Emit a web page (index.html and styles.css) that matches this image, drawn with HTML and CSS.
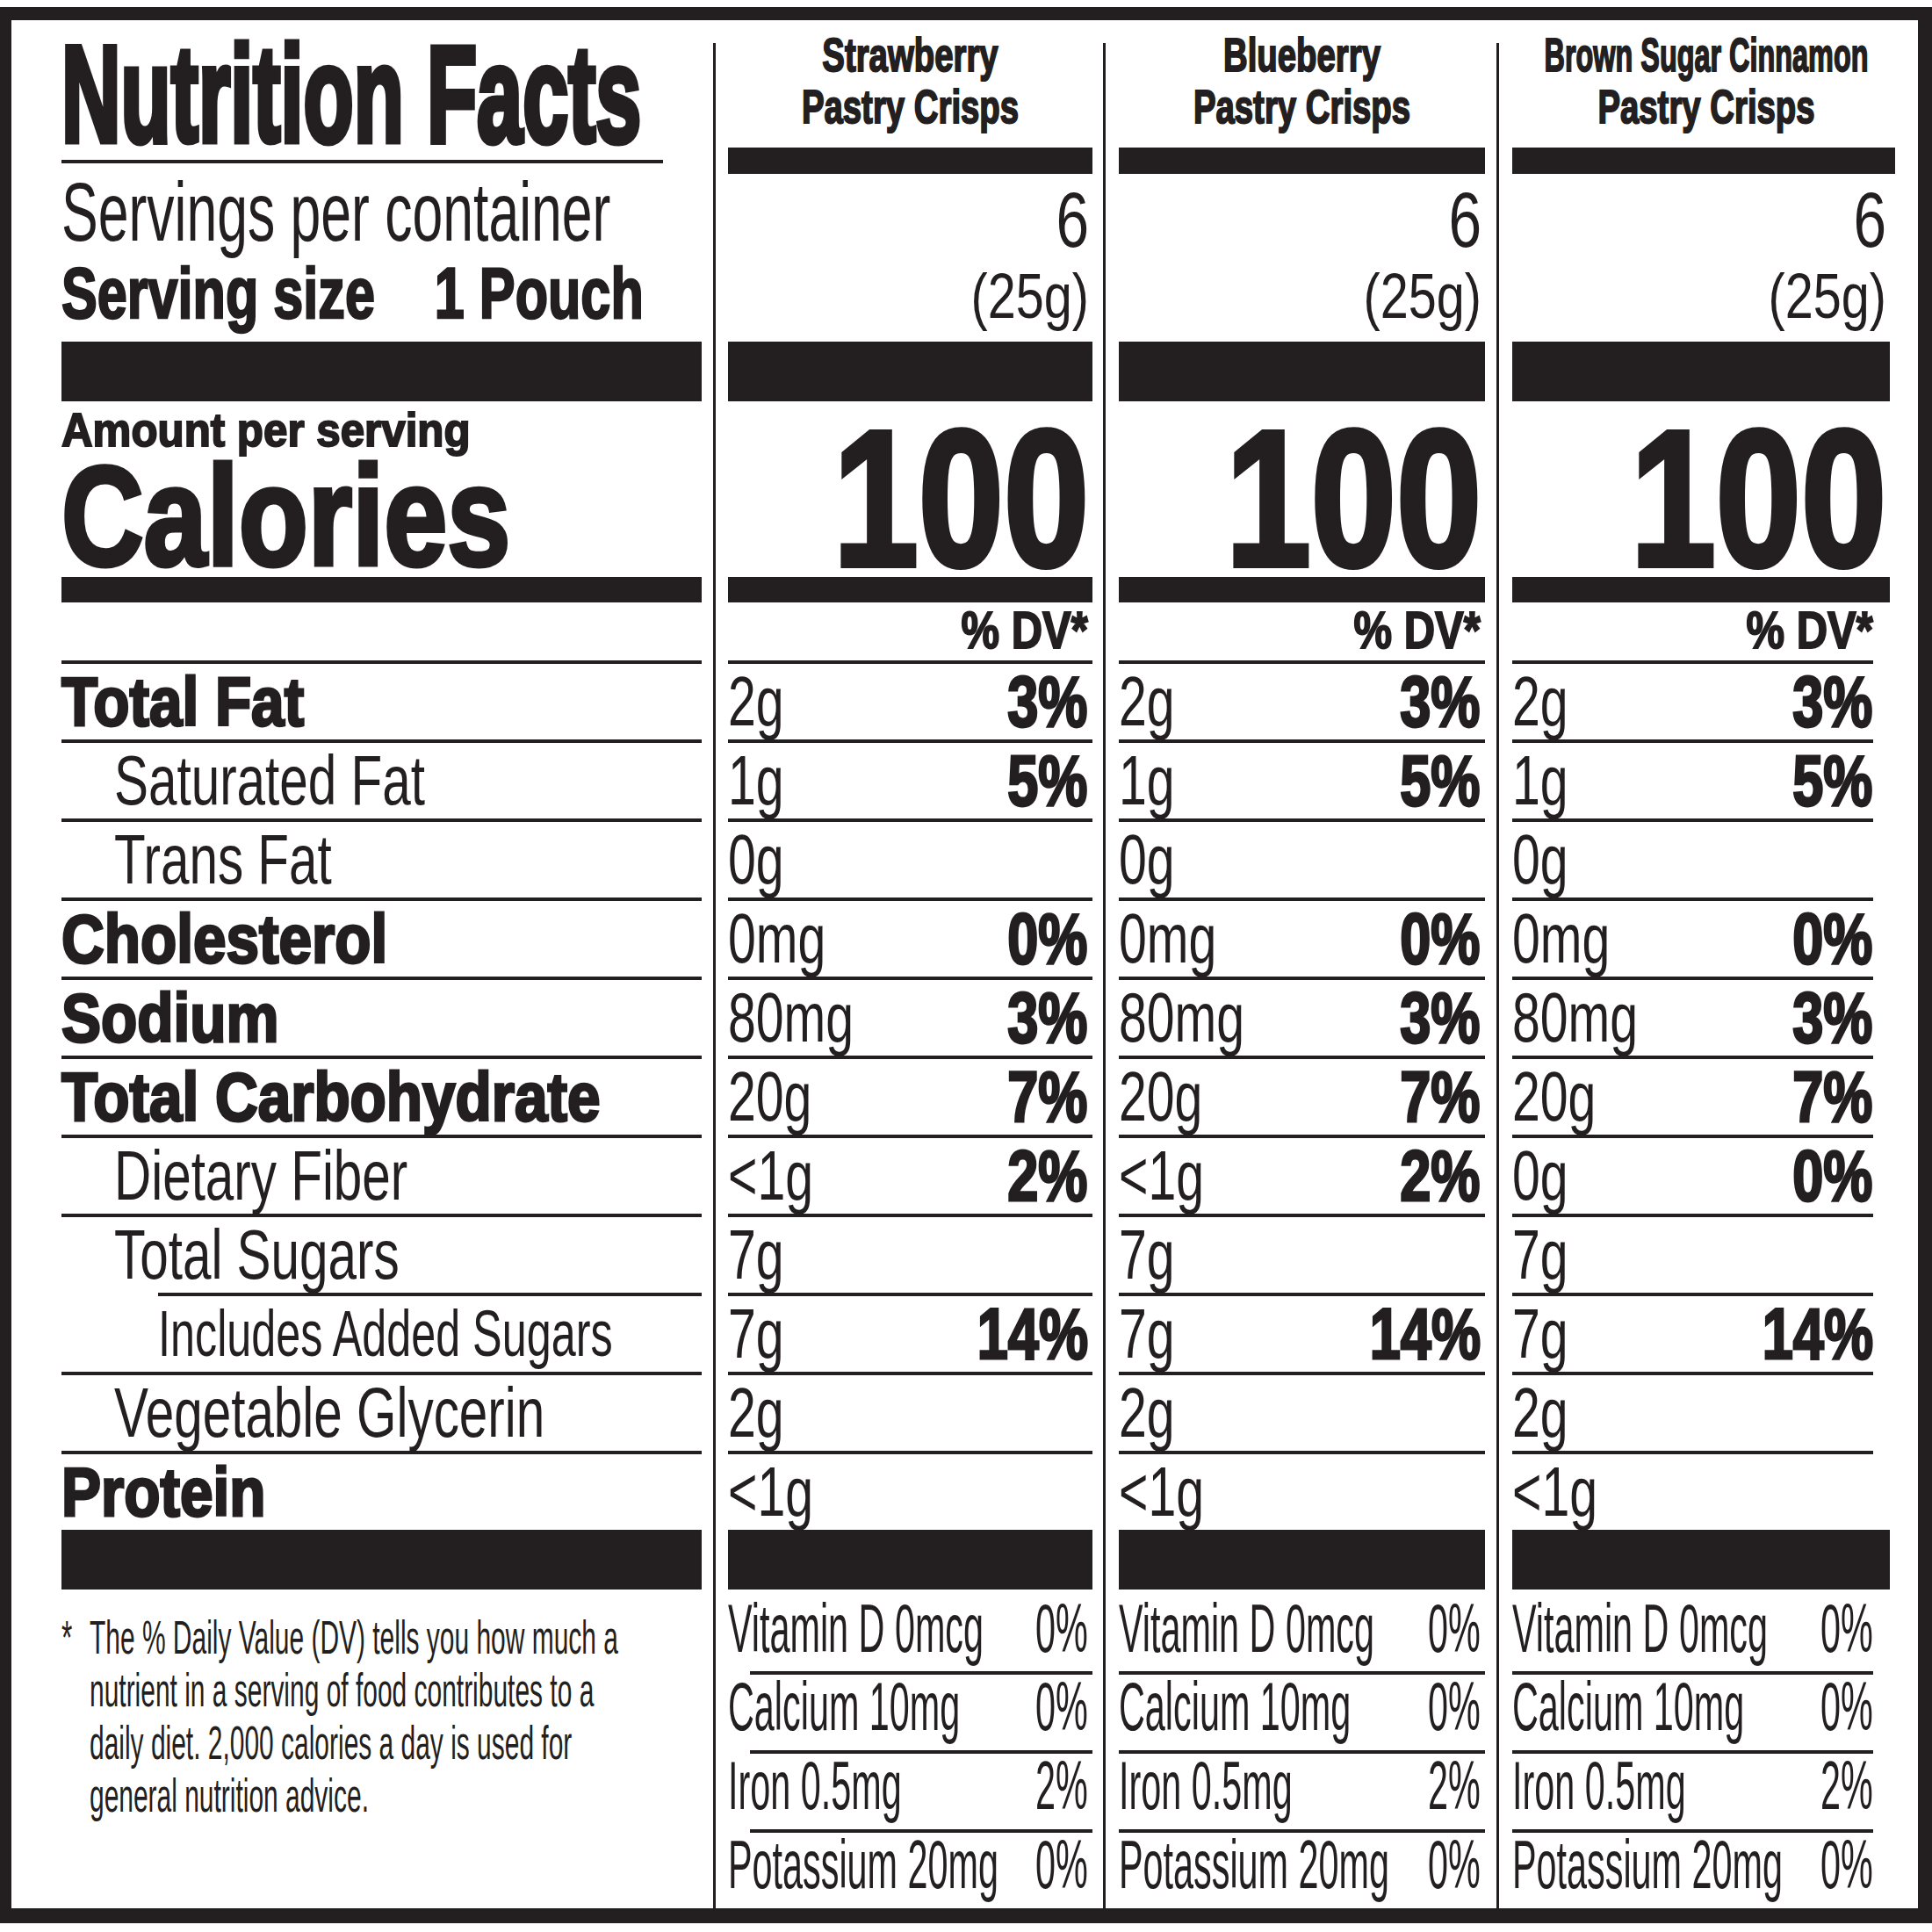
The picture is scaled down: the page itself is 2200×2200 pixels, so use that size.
FILE: index.html
```html
<!DOCTYPE html>
<html>
<head>
<meta charset="utf-8">
<link rel="stylesheet" href="styles.css">
</head>
<body>
<div class="label">
  <div class="main">
    <div class="top">
      <div class="title">Nutrition Facts</div>
      <div class="title-rule"></div>
      <div class="servings">Servings per container</div>
      <div class="ssize">Serving size    1 Pouch</div>
    </div>
    <div class="bar-thick"></div>
    <div class="cal">
      <div class="amount">Amount per serving</div>
      <div class="calories">Calories</div>
    </div>
    <div class="bar-mid"></div>
    <div class="dv"></div>
    <div class="row"><span class="lbl b">Total Fat</span></div>
    <div class="row"><span class="lbl ind">Saturated Fat</span></div>
    <div class="row"><span class="lbl ind">Trans Fat</span></div>
    <div class="row"><span class="lbl b">Cholesterol</span></div>
    <div class="row"><span class="lbl b">Sodium</span></div>
    <div class="row"><span class="lbl b">Total Carbohydrate</span></div>
    <div class="row"><span class="lbl ind">Dietary Fiber</span></div>
    <div class="row"><span class="lbl ind">Total Sugars</span></div>
    <div class="row added"><span class="lbl add">Includes Added Sugars</span></div>
    <div class="row"><span class="lbl ind">Vegetable Glycerin</span></div>
    <div class="row"><span class="lbl b">Protein</span></div>
    <div class="bar-thick"></div>
    <div class="bottom">
      <div class="fn">
        <div class="star">*</div>
        <div class="fn-lines">
          <div>The % Daily Value (DV) tells you how much a</div>
          <div>nutrient in a serving of food contributes to a</div>
          <div>daily diet. 2,000 calories a day is used for</div>
          <div>general nutrition advice.</div>
        </div>
      </div>
    </div>
  </div>

  <div class="vdiv d1"></div>

  <div class="vcol c2">
    <div class="top">
      <div class="hdr"><div>Strawberry</div><div>Pastry Crisps</div></div>
      <div class="bar-sm"></div>
      <div class="six">6</div>
      <div class="g25">(25g)</div>
    </div>
    <div class="bar-thick"></div>
    <div class="cal"><div class="hundred">100</div></div>
    <div class="bar-mid"></div>
    <div class="dv"><span class="dvh">% DV*</span></div>
    <div class="row"><span class="v">2g</span><span class="d">3%</span></div>
    <div class="row"><span class="v">1g</span><span class="d">5%</span></div>
    <div class="row"><span class="v">0g</span></div>
    <div class="row"><span class="v">0mg</span><span class="d">0%</span></div>
    <div class="row"><span class="v">80mg</span><span class="d">3%</span></div>
    <div class="row"><span class="v">20g</span><span class="d">7%</span></div>
    <div class="row"><span class="v">&lt;1g</span><span class="d">2%</span></div>
    <div class="row"><span class="v">7g</span></div>
    <div class="row"><span class="v">7g</span><span class="d">14%</span></div>
    <div class="row"><span class="v">2g</span></div>
    <div class="row"><span class="v">&lt;1g</span></div>
    <div class="bar-thick"></div>
    <div class="bottom">
      <div class="vrow first"><span class="vt">Vitamin D 0mcg</span><span class="vp">0%</span></div>
      <div class="vrow"><span class="vt">Calcium 10mg</span><span class="vp">0%</span></div>
      <div class="vrow"><span class="vt">Iron 0.5mg</span><span class="vp">2%</span></div>
      <div class="vrow"><span class="vt">Potassium 20mg</span><span class="vp">0%</span></div>
    </div>
  </div>

  <div class="vdiv d2"></div>

  <div class="vcol c3">
    <div class="top">
      <div class="hdr"><div>Blueberry</div><div>Pastry Crisps</div></div>
      <div class="bar-sm"></div>
      <div class="six">6</div>
      <div class="g25">(25g)</div>
    </div>
    <div class="bar-thick"></div>
    <div class="cal"><div class="hundred">100</div></div>
    <div class="bar-mid"></div>
    <div class="dv"><span class="dvh">% DV*</span></div>
    <div class="row"><span class="v">2g</span><span class="d">3%</span></div>
    <div class="row"><span class="v">1g</span><span class="d">5%</span></div>
    <div class="row"><span class="v">0g</span></div>
    <div class="row"><span class="v">0mg</span><span class="d">0%</span></div>
    <div class="row"><span class="v">80mg</span><span class="d">3%</span></div>
    <div class="row"><span class="v">20g</span><span class="d">7%</span></div>
    <div class="row"><span class="v">&lt;1g</span><span class="d">2%</span></div>
    <div class="row"><span class="v">7g</span></div>
    <div class="row"><span class="v">7g</span><span class="d">14%</span></div>
    <div class="row"><span class="v">2g</span></div>
    <div class="row"><span class="v">&lt;1g</span></div>
    <div class="bar-thick"></div>
    <div class="bottom">
      <div class="vrow first"><span class="vt">Vitamin D 0mcg</span><span class="vp">0%</span></div>
      <div class="vrow"><span class="vt">Calcium 10mg</span><span class="vp">0%</span></div>
      <div class="vrow"><span class="vt">Iron 0.5mg</span><span class="vp">2%</span></div>
      <div class="vrow"><span class="vt">Potassium 20mg</span><span class="vp">0%</span></div>
    </div>
  </div>

  <div class="vdiv d3"></div>

  <div class="vcol c4">
    <div class="top">
      <div class="hdr"><div class="tight">Brown Sugar Cinnamon</div><div>Pastry Crisps</div></div>
      <div class="bar-sm"></div>
      <div class="six">6</div>
      <div class="g25">(25g)</div>
    </div>
    <div class="bar-thick"></div>
    <div class="cal"><div class="hundred">100</div></div>
    <div class="bar-mid"></div>
    <div class="dv"><span class="dvh">% DV*</span></div>
    <div class="row"><span class="v">2g</span><span class="d">3%</span></div>
    <div class="row"><span class="v">1g</span><span class="d">5%</span></div>
    <div class="row"><span class="v">0g</span></div>
    <div class="row"><span class="v">0mg</span><span class="d">0%</span></div>
    <div class="row"><span class="v">80mg</span><span class="d">3%</span></div>
    <div class="row"><span class="v">20g</span><span class="d">7%</span></div>
    <div class="row"><span class="v">0g</span><span class="d">0%</span></div>
    <div class="row"><span class="v">7g</span></div>
    <div class="row"><span class="v">7g</span><span class="d">14%</span></div>
    <div class="row"><span class="v">2g</span></div>
    <div class="row"><span class="v">&lt;1g</span></div>
    <div class="bar-thick"></div>
    <div class="bottom">
      <div class="vrow first"><span class="vt">Vitamin D 0mcg</span><span class="vp">0%</span></div>
      <div class="vrow"><span class="vt">Calcium 10mg</span><span class="vp">0%</span></div>
      <div class="vrow"><span class="vt">Iron 0.5mg</span><span class="vp">2%</span></div>
      <div class="vrow"><span class="vt">Potassium 20mg</span><span class="vp">0%</span></div>
    </div>
  </div>
</div>
</body>
</html>
```

FILE: styles.css
```css
html, body {
  margin: 0;
  padding: 0;
  background: #ffffff;
}

body {
  font-family: "Liberation Sans", Arial, sans-serif;
  color: #231f20;
}

.label {
  margin-top: 8px;
  width: 2200px;
  height: 2182px;
  box-sizing: border-box;
  border-style: solid;
  border-color: #231f20;
  border-width: 15px 16px 17px 13px;
  display: flex;
  overflow: hidden;
}

.main {
  flex: 0 0 786px;
  box-sizing: border-box;
  padding-left: 57px;
  display: flex;
  flex-direction: column;
  min-width: 0;
}

.vcol {
  display: flex;
  flex-direction: column;
  min-width: 0;
}

.c2 { flex: 0 0 415px; }
.c3 { flex: 0 0 417px; }
.c4 { flex: 0 0 430px; }

.vdiv {
  flex: 0 0 3px;
  background: #231f20;
  margin-top: 26px;
}
.d1 { margin-left: 13px; margin-right: 14px; }
.d2 { margin-left: 12px; margin-right: 15px; }
.d3 { margin-left: 13px; margin-right: 15px; }

/* ---------- sections ---------- */
.top {
  height: 366px;
  flex: none;
  display: flex;
  flex-direction: column;
}

.bar-thick {
  height: 68px;
  flex: none;
  background: #231f20;
}

.cal {
  height: 200px;
  flex: none;
}

.bar-mid {
  height: 29px;
  flex: none;
  background: #231f20;
}

.dv {
  height: 66px;
  flex: none;
  display: flex;
  justify-content: flex-end;
}

.row {
  height: 90px;
  flex: none;
  box-sizing: border-box;
  border-top: 4px solid #231f20;
  display: flex;
  justify-content: space-between;
}

.bottom {
  height: 363px;
  flex: none;
}

/* ---------- left column ---------- */
.title {
  margin-top: 19px;
  font-size: 156px;
  line-height: 130px;
  font-weight: 700;
  white-space: nowrap;
  transform: scaleX(0.6);
  transform-origin: left center;
  -webkit-text-stroke: 7px #231f20;
}

.title-rule {
  margin-top: 10px;
  height: 4px;
  width: 685px;
  background: #231f20;
  flex: none;
}

.servings {
  font-size: 94px;
  line-height: 112px;
  white-space: nowrap;
  transform: scaleX(0.665);
  transform-origin: left center;
}

.ssize {
  margin-top: 6px;
  font-size: 81px;
  line-height: 60px;
  font-weight: 700;
  white-space: pre;
  transform: scaleX(0.755);
  transform-origin: left center;
  -webkit-text-stroke: 2.5px #231f20;
}

.amount {
  font-size: 53px;
  line-height: 65px;
  font-weight: 700;
  white-space: nowrap;
  transform: scaleX(0.93);
  transform-origin: left center;
  -webkit-text-stroke: 2px #231f20;
}

.calories {
  font-size: 162px;
  line-height: 130px;
  font-weight: 700;
  white-space: nowrap;
  transform: scaleX(0.8);
  transform-origin: left center;
  -webkit-text-stroke: 5px #231f20;
}

.lbl {
  font-size: 80px;
  line-height: 86px;
  white-space: nowrap;
  min-width: 0;
  transform: scaleX(0.73);
  transform-origin: left center;
}

.lbl.b {
  font-size: 78px;
  font-weight: 700;
  transform: scaleX(0.865);
  -webkit-text-stroke: 3px #231f20;
}

.lbl.ind {
  margin-left: 60px;
}

.row.added {
  margin-left: 110px;
}

.lbl.add {
  font-size: 74px;
  transform: scaleX(0.68);
}

.fn {
  margin-top: 25px;
  display: flex;
  font-size: 53px;
  line-height: 60px;
}

.star {
  flex: 0 0 32px;
  white-space: nowrap;
  transform: scaleX(0.6);
  transform-origin: left center;
}

.fn-lines {
  flex: 1 1 auto;
  min-width: 0;
}

.fn-lines div {
  white-space: nowrap;
  transform: scaleX(0.565);
  transform-origin: left center;
}

/* ---------- value columns ---------- */
.hdr {
  margin-top: 10px;
  font-size: 54px;
  line-height: 59px;
  font-weight: 700;
  text-align: center;
}

.hdr div {
  margin: 0 -200px;
  white-space: nowrap;
  transform: scaleX(0.71);
  -webkit-text-stroke: 2px #231f20;
}

.c4 .hdr {
  padding-left: 12px;
}

.hdr .tight {
  transform: scaleX(0.6);
}

.bar-sm {
  margin-top: 17px;
  height: 30px;
  flex: none;
  background: #231f20;
}

.c4 .bar-sm {
  margin-right: -6px;
}

.six {
  font-size: 89px;
  line-height: 104px;
  text-align: right;
  padding-right: 5px;
  transform: scaleX(0.76);
  transform-origin: right center;
}

.g25 {
  font-size: 72px;
  line-height: 70px;
  text-align: right;
  padding-right: 5px;
  transform: scaleX(0.8);
  transform-origin: right center;
}

.hundred {
  margin-top: 26px;
  font-size: 221px;
  line-height: 170px;
  font-weight: 700;
  text-align: right;
  padding-right: 5px;
  transform: scaleX(0.79);
  transform-origin: right center;
  -webkit-text-stroke: 6px #231f20;
}

.vcol .dv {
  padding-right: 5px;
}

.dvh {
  font-size: 59px;
  line-height: 65px;
  font-weight: 700;
  white-space: nowrap;
  transform: scaleX(0.83);
  transform-origin: right center;
  -webkit-text-stroke: 2px #231f20;
}

.vcol .row {
  padding-right: 5px;
}

.v {
  flex: 1 1 auto;
  min-width: 0;
  font-size: 80px;
  line-height: 86px;
  white-space: nowrap;
  transform: scaleX(0.715);
  transform-origin: left center;
}

.d {
  flex: none;
  font-size: 82px;
  line-height: 86px;
  font-weight: 700;
  white-space: nowrap;
  transform: scaleX(0.77);
  transform-origin: right center;
  -webkit-text-stroke: 3px #231f20;
}

.c4 .row,
.c4 .dv,
.c4 .vrow {
  margin-right: 19px;
  padding-right: 0;
}

.vrow {
  height: 90px;
  box-sizing: border-box;
  border-top: 4px solid #231f20;
  display: flex;
  justify-content: space-between;
  padding-right: 5px;
}

.vrow.first {
  height: 93px;
  border-top: 0;
  padding-top: 8px;
}

.c2 .vrow:not(.first) {
  border-top: 0;
  padding-top: 4px;
  background: linear-gradient(#231f20, #231f20) 25px 0 / calc(100% - 25px) 4px no-repeat;
}

.vt {
  flex: 1 1 auto;
  min-width: 0;
  font-size: 78px;
  line-height: 72px;
  white-space: nowrap;
  transform: scaleX(0.53);
  transform-origin: left center;
}

.vp {
  flex: none;
  font-size: 78px;
  line-height: 72px;
  white-space: nowrap;
  transform: scaleX(0.53);
  transform-origin: right center;
}
```
